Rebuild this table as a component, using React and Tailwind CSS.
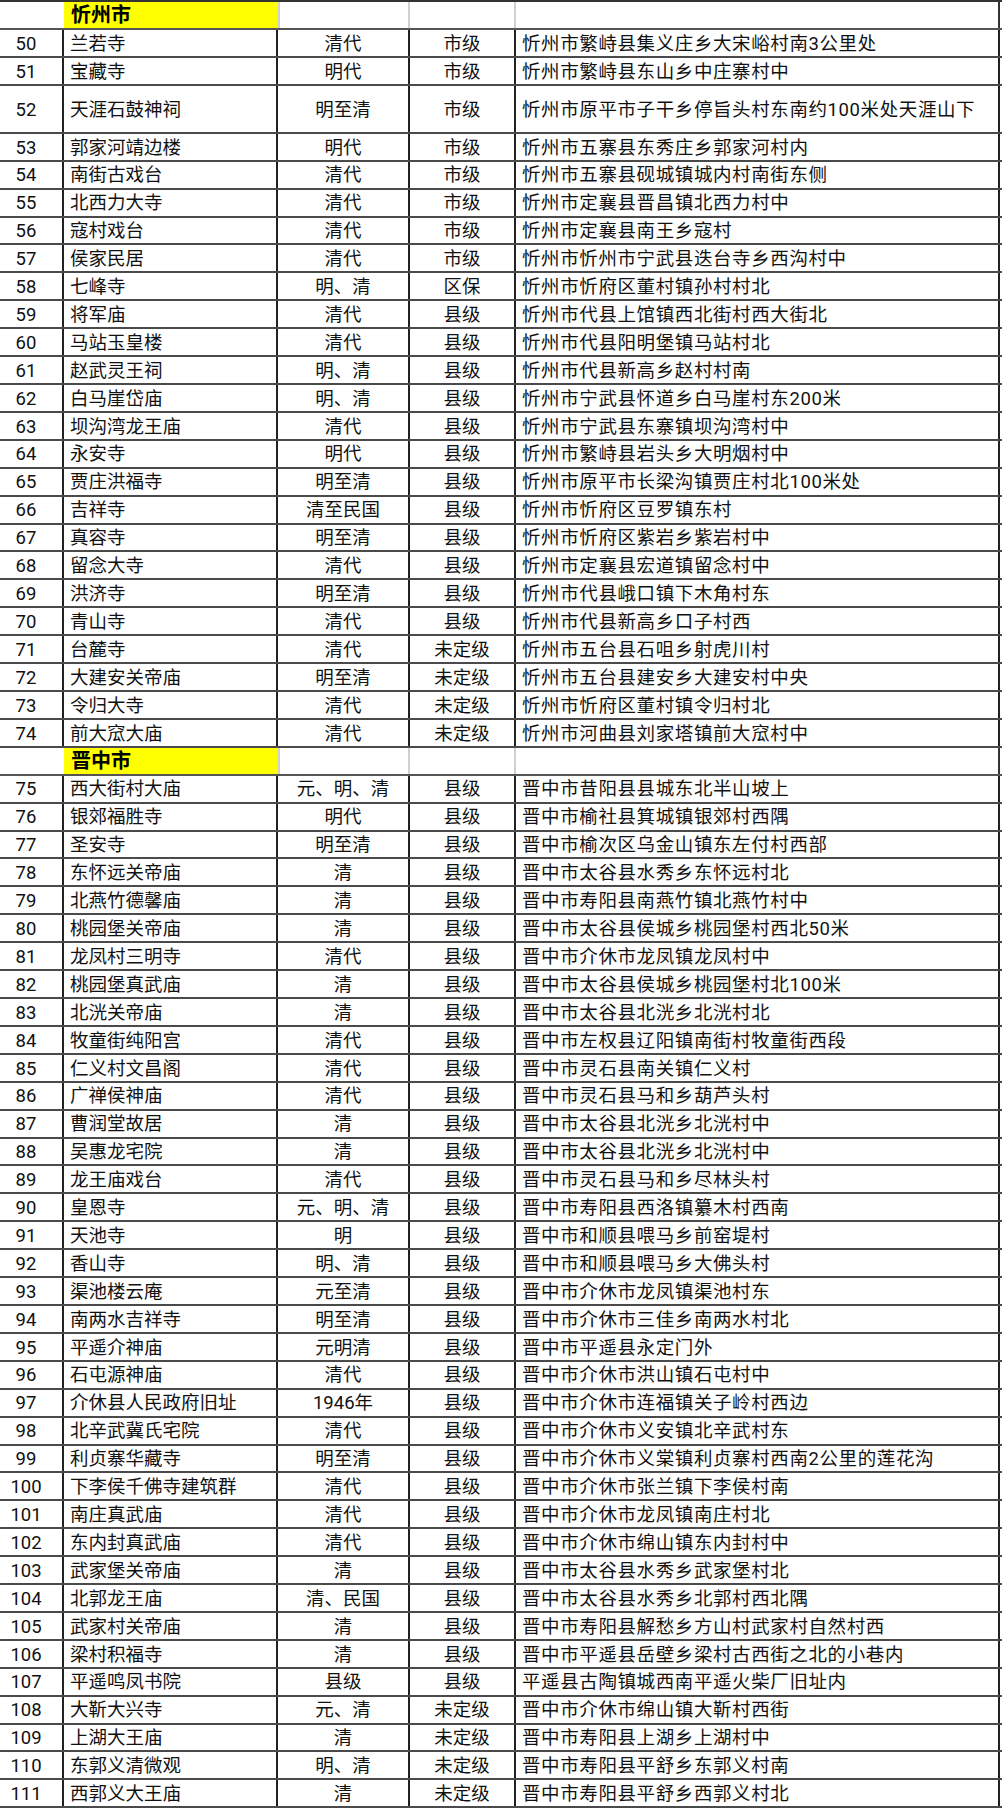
import React from 'react';

const xinzhou = [
  ['50', '兰若寺', '清代', '市级', '忻州市繁峙县集义庄乡大宋峪村南3公里处'],
  ['51', '宝藏寺', '明代', '市级', '忻州市繁峙县东山乡中庄寨村中'],
  ['52', '天涯石鼓神祠', '明至清', '市级', '忻州市原平市子干乡停旨头村东南约100米处天涯山下', true],
  ['53', '郭家河靖边楼', '明代', '市级', '忻州市五寨县东秀庄乡郭家河村内'],
  ['54', '南街古戏台', '清代', '市级', '忻州市五寨县砚城镇城内村南街东侧'],
  ['55', '北西力大寺', '清代', '市级', '忻州市定襄县晋昌镇北西力村中'],
  ['56', '寇村戏台', '清代', '市级', '忻州市定襄县南王乡寇村'],
  ['57', '侯家民居', '清代', '市级', '忻州市忻州市宁武县迭台寺乡西沟村中'],
  ['58', '七峰寺', '明、清', '区保', '忻州市忻府区董村镇孙村村北'],
  ['59', '将军庙', '清代', '县级', '忻州市代县上馆镇西北街村西大街北'],
  ['60', '马站玉皇楼', '清代', '县级', '忻州市代县阳明堡镇马站村北'],
  ['61', '赵武灵王祠', '明、清', '县级', '忻州市代县新高乡赵村村南'],
  ['62', '白马崖岱庙', '明、清', '县级', '忻州市宁武县怀道乡白马崖村东200米'],
  ['63', '坝沟湾龙王庙', '清代', '县级', '忻州市宁武县东寨镇坝沟湾村中'],
  ['64', '永安寺', '明代', '县级', '忻州市繁峙县岩头乡大明烟村中'],
  ['65', '贾庄洪福寺', '明至清', '县级', '忻州市原平市长梁沟镇贾庄村北100米处'],
  ['66', '吉祥寺', '清至民国', '县级', '忻州市忻府区豆罗镇东村'],
  ['67', '真容寺', '明至清', '县级', '忻州市忻府区紫岩乡紫岩村中'],
  ['68', '留念大寺', '清代', '县级', '忻州市定襄县宏道镇留念村中'],
  ['69', '洪济寺', '明至清', '县级', '忻州市代县峨口镇下木角村东'],
  ['70', '青山寺', '清代', '县级', '忻州市代县新高乡口子村西'],
  ['71', '台麓寺', '清代', '未定级', '忻州市五台县石咀乡射虎川村'],
  ['72', '大建安关帝庙', '明至清', '未定级', '忻州市五台县建安乡大建安村中央'],
  ['73', '令归大寺', '清代', '未定级', '忻州市忻府区董村镇令归村北'],
  ['74', '前大窊大庙', '清代', '未定级', '忻州市河曲县刘家塔镇前大窊村中'],
];

const jinzhong = [
  ['75', '西大街村大庙', '元、明、清', '县级', '晋中市昔阳县县城东北半山坡上'],
  ['76', '银郊福胜寺', '明代', '县级', '晋中市榆社县箕城镇银郊村西隅'],
  ['77', '圣安寺', '明至清', '县级', '晋中市榆次区乌金山镇东左付村西部'],
  ['78', '东怀远关帝庙', '清', '县级', '晋中市太谷县水秀乡东怀远村北'],
  ['79', '北燕竹德馨庙', '清', '县级', '晋中市寿阳县南燕竹镇北燕竹村中'],
  ['80', '桃园堡关帝庙', '清', '县级', '晋中市太谷县侯城乡桃园堡村西北50米'],
  ['81', '龙凤村三明寺', '清代', '县级', '晋中市介休市龙凤镇龙凤村中'],
  ['82', '桃园堡真武庙', '清', '县级', '晋中市太谷县侯城乡桃园堡村北100米'],
  ['83', '北洸关帝庙', '清', '县级', '晋中市太谷县北洸乡北洸村北'],
  ['84', '牧童街纯阳宫', '清代', '县级', '晋中市左权县辽阳镇南街村牧童街西段'],
  ['85', '仁义村文昌阁', '清代', '县级', '晋中市灵石县南关镇仁义村'],
  ['86', '广禅侯神庙', '清代', '县级', '晋中市灵石县马和乡葫芦头村'],
  ['87', '曹润堂故居', '清', '县级', '晋中市太谷县北洸乡北洸村中'],
  ['88', '吴惠龙宅院', '清', '县级', '晋中市太谷县北洸乡北洸村中'],
  ['89', '龙王庙戏台', '清代', '县级', '晋中市灵石县马和乡尽林头村'],
  ['90', '皇恩寺', '元、明、清', '县级', '晋中市寿阳县西洛镇纂木村西南'],
  ['91', '天池寺', '明', '县级', '晋中市和顺县喂马乡前窑堤村'],
  ['92', '香山寺', '明、清', '县级', '晋中市和顺县喂马乡大佛头村'],
  ['93', '渠池楼云庵', '元至清', '县级', '晋中市介休市龙凤镇渠池村东'],
  ['94', '南两水吉祥寺', '明至清', '县级', '晋中市介休市三佳乡南两水村北'],
  ['95', '平遥介神庙', '元明清', '县级', '晋中市平遥县永定门外'],
  ['96', '石屯源神庙', '清代', '县级', '晋中市介休市洪山镇石屯村中'],
  ['97', '介休县人民政府旧址', '1946年', '县级', '晋中市介休市连福镇关子岭村西边'],
  ['98', '北辛武冀氏宅院', '清代', '县级', '晋中市介休市义安镇北辛武村东'],
  ['99', '利贞寨华藏寺', '明至清', '县级', '晋中市介休市义棠镇利贞寨村西南2公里的莲花沟'],
  ['100', '下李侯千佛寺建筑群', '清代', '县级', '晋中市介休市张兰镇下李侯村南'],
  ['101', '南庄真武庙', '清代', '县级', '晋中市介休市龙凤镇南庄村北'],
  ['102', '东内封真武庙', '清代', '县级', '晋中市介休市绵山镇东内封村中'],
  ['103', '武家堡关帝庙', '清', '县级', '晋中市太谷县水秀乡武家堡村北'],
  ['104', '北郭龙王庙', '清、民国', '县级', '晋中市太谷县水秀乡北郭村西北隅'],
  ['105', '武家村关帝庙', '清', '县级', '晋中市寿阳县解愁乡方山村武家村自然村西'],
  ['106', '梁村积福寺', '清', '县级', '晋中市平遥县岳壁乡梁村古西街之北的小巷内'],
  ['107', '平遥鸣凤书院', '县级', '县级', '平遥县古陶镇城西南平遥火柴厂旧址内'],
  ['108', '大靳大兴寺', '元、清', '未定级', '晋中市介休市绵山镇大靳村西街'],
  ['109', '上湖大王庙', '清', '未定级', '晋中市寿阳县上湖乡上湖村中'],
  ['110', '东郭义清微观', '明、清', '未定级', '晋中市寿阳县平舒乡东郭义村南'],
  ['111', '西郭义大王庙', '清', '未定级', '晋中市寿阳县平舒乡西郭义村北'],
];

// 城市标题行（黄色底）
const CityRow = ({ name }) => (
  <div className="flex h-[28px] border-b-2 border-[#555]">
    <div className="w-[64px] shrink-0" />
    <div className="w-[214px] shrink-0 bg-[#ffff00] pl-[7px] flex items-center text-[20px] font-bold text-black">
      {name}
    </div>
    <div className="w-[132px] shrink-0 border-r-2 border-[#d0d0d0] border-l-2" />
    <div className="w-[106px] shrink-0 border-r-2 border-[#d0d0d0]" />
    <div className="w-[484px] shrink-0 border-r-2 border-[#333]" />
  </div>
);

const Row = ({ r }) => {
  const [no, name, era, level, addr, tall] = r;
  return (
    <div className={`flex ${tall ? 'h-[48px]' : 'h-[27.92px]'} border-b-2 border-[#4a4a4a]`}>
      <div className="w-[64px] shrink-0 border-r-2 border-[#222] flex items-center justify-center pr-[10px] pt-[2px]">{no}</div>
      <div className="w-[214px] shrink-0 border-r-2 border-[#222] flex items-center pl-[6px] pt-[2px] whitespace-nowrap">{name}</div>
      <div className="w-[132px] shrink-0 border-r-2 border-[#222] flex items-center justify-center pt-[2px] whitespace-nowrap">{era}</div>
      <div className="w-[106px] shrink-0 border-r-2 border-[#222] flex items-center justify-center pt-[2px] whitespace-nowrap">{level}</div>
      <div className="w-[484px] shrink-0 border-r-2 border-[#222] flex items-center pl-[6px] pt-[2px] whitespace-nowrap tracking-[0.6px]">{addr}</div>
    </div>
  );
};

export default function App() {
  return (
    <div className="w-[1002px] h-[1808px] overflow-hidden bg-white text-[#111] text-[18.5px] leading-none font-['Roboto','Noto_Sans_CJK_SC',sans-serif]">
      <div className="border-t-2 border-[#333] w-[1002px]">
        <CityRow name="忻州市" />
        {xinzhou.map((r) => <Row key={r[0]} r={r} />)}
        <CityRow name="晋中市" />
        {jinzhong.map((r) => <Row key={r[0]} r={r} />)}
      </div>
    </div>
  );
}
